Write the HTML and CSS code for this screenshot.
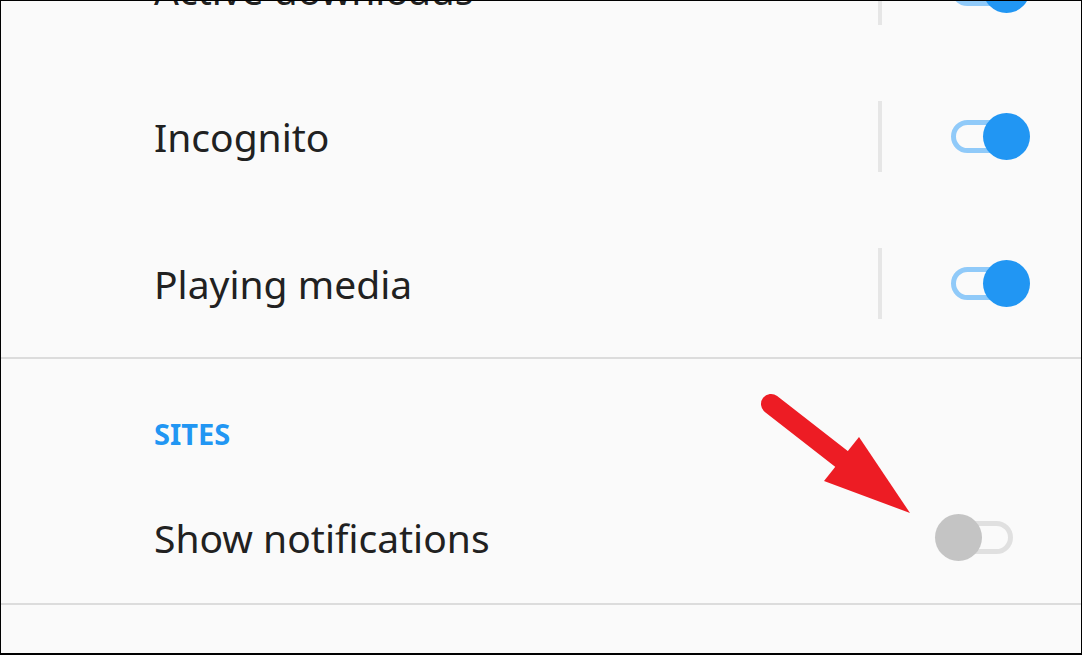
FILE: index.html
```html
<!DOCTYPE html>
<html lang="en">
<head>
  <meta charset="UTF-8">
  <meta name="viewport" content="width=device-width, initial-scale=1.0">
  <title>Notifications</title>
  <link rel="stylesheet" href="styles.css">
</head>
<body>
  <div class="screen">
    <!-- Chrome notification channels -->
    <div class="group first">
      <div class="row">
        <span class="label">Active downloads</span>
        <span class="sep"></span>
        <span class="switch on"><span class="knob"></span></span>
      </div>
      <div class="row">
        <span class="label">Incognito</span>
        <span class="sep"></span>
        <span class="switch on"><span class="knob"></span></span>
      </div>
      <div class="row">
        <span class="label">Playing media</span>
        <span class="sep"></span>
        <span class="switch on"><span class="knob"></span></span>
      </div>
    </div>
    <div class="divider"></div>

    <div class="group">
      <h3 class="group-title">SITES</h3>
      <div class="row short">
        <span class="label">Show notifications</span>
        <span class="sep blank"></span>
        <span class="switch"><span class="knob"></span></span>
      </div>
    </div>
    <div class="divider"></div>

    <!-- annotation arrow -->
    <svg class="arrow" width="200" height="150" viewBox="0 0 200 150">
      <line x1="31" y1="24" x2="108" y2="84" stroke="#ed1c24" stroke-width="20" stroke-linecap="round"/>
      <polygon points="119,57 84,101 170,133" fill="#ed1c24"/>
    </svg>
  </div>
</body>
</html>
```

FILE: styles.css
```css
/* Basic resets */
* {
  margin: 0;
  padding: 0;
  box-sizing: border-box;
}
body {
  background: #fff;
  font-family: "Noto Sans", "Open Sans", sans-serif;
}
.screen {
  position: relative;
  width: 1082px;
  height: 655px;
  overflow: hidden;
  border: 1px solid #000;
  border-bottom-width: 2px;
  background: #fafafa;
}
.group.first {
  margin-top: -85px;
}
/* Setting rows */
.row {
  display: flex;
  align-items: center;
  height: 147px;
  padding: 0 68px 0 153px;
}
.row.short {
  height: 132px;
}
.label {
  flex: 1;
  font-size: 39px;
  line-height: 1;
  color: #212121;
}
.sep {
  width: 4px;
  height: 71px;
  margin-right: 69px;
  background: #e6e6e6;
}
.sep.blank {
  background: transparent;
}
/* Toggle switch */
.switch {
  position: relative;
  width: 62px;
  height: 33px;
  border: 5px solid #e0e0e0;
  border-radius: 17px;
}
.switch .knob {
  position: absolute;
  top: -12px;
  left: -21.5px;
  width: 47px;
  height: 47px;
  border-radius: 50%;
  background: #c4c4c4;
}
.switch.on {
  border-color: #90caf9;
}
.switch.on .knob {
  left: 26.5px;
  background: #2196f3;
}
.divider {
  height: 2px;
  background: #dcdcdc;
}
.group-title {
  height: 112px;
  padding: 60px 0 0 153px;
  font-size: 29px;
  line-height: 1;
  font-weight: bold;
  color: #2196f3;
}
.arrow {
  position: absolute;
  left: 739px;
  top: 379px;
}
```
